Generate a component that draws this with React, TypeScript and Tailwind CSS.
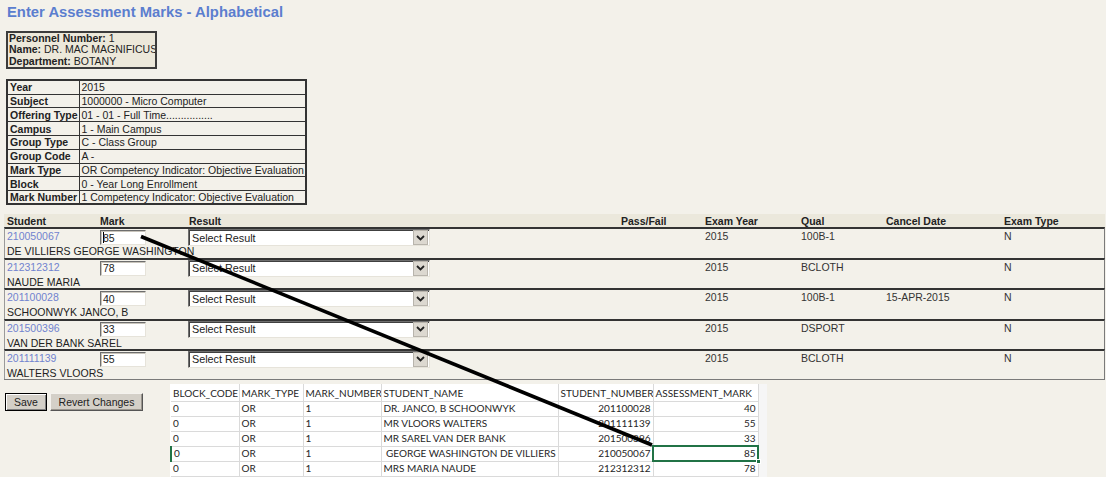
import React from "react";

const info: [string, string][] = [
  ["Year", "2015"],
  ["Subject", "1000000 - Micro Computer"],
  ["Offering Type", "01 - 01 - Full Time................"],
  ["Campus", "1 - Main Campus"],
  ["Group Type", "C - Class Group"],
  ["Group Code", "A -"],
  ["Mark Type", "OR Competency Indicator: Objective Evaluation"],
  ["Block", "0 - Year Long Enrollment"],
  ["Mark Number", "1 Competency Indicator: Objective Evaluation"],
];

const students = [
  { num: "210050067", mark: "85", qual: "100B-1", cancel: "", name: "DE VILLIERS GEORGE WASHINGTON", caret: true },
  { num: "212312312", mark: "78", qual: "BCLOTH", cancel: "", name: "NAUDE MARIA", caret: false },
  { num: "201100028", mark: "40", qual: "100B-1", cancel: "15-APR-2015", name: "SCHOONWYK JANCO, B", caret: false },
  { num: "201500396", mark: "33", qual: "DSPORT", cancel: "", name: "VAN DER BANK SAREL", caret: false },
  { num: "201111139", mark: "55", qual: "BCLOTH", cancel: "", name: "WALTERS VLOORS", caret: false },
];

const excelRows = [
  ["0", "OR", "1", "DR. JANCO, B SCHOONWYK", "201100028", "40"],
  ["0", "OR", "1", "MR VLOORS WALTERS", "201111139", "55"],
  ["0", "OR", "1", "MR SAREL VAN DER BANK", "201500396", "33"],
  ["0", "OR", "1", "\u00a0GEORGE WASHINGTON DE VILLIERS", "210050067", "85"],
  ["0", "OR", "1", "MRS MARIA NAUDE", "212312312", "78"],
];

const excelHeads = ["BLOCK_CODE", "MARK_TYPE", "MARK_NUMBER", "STUDENT_NAME", "STUDENT_NUMBER", "ASSESSMENT_MARK"];

function Chevron() {
  return (
    <svg width="9" height="6" viewBox="0 0 9 6">
      <polyline points="1,1 4.5,4.5 8,1" fill="none" stroke="#222" strokeWidth="1.8" />
    </svg>
  );
}

export default function App() {
  return (
    <div className="relative w-[1106px] h-[477px] overflow-hidden bg-[#f3f1ea] font-['Liberation_Sans',Arial,sans-serif] text-[10.5px] text-[#222]">
      {/* Title */}
      <div className="pt-[3px] pl-[7px] text-[14.8px] leading-[18px] font-bold text-[#5b7ecf]">
        Enter Assessment Marks - Alphabetical
      </div>

      {/* Personnel box */}
      <div className="mt-[10px] ml-[6px] w-[151px] border-2 border-[#3c3c3c] bg-[#ece8da] pl-[1px] leading-[11.4px] whitespace-nowrap overflow-hidden">
        <div>
          <span className="font-bold">Personnel Number:</span> 1
        </div>
        <div>
          <span className="font-bold">Name:</span> DR. MAC MAGNIFICUS
        </div>
        <div>
          <span className="font-bold">Department:</span> BOTANY
        </div>
      </div>

      {/* Info table */}
      <table className="mt-[10px] ml-[6px] w-[300px] border-collapse border-2 border-[#333]">
        <tbody>
          {info.map(([k, v]) => (
            <tr key={k}>
              <td className="w-[72px] border border-[#333] px-[2px] py-0 h-[13.8px] leading-[12px] font-bold whitespace-nowrap">
                {k}
              </td>
              <td className="border border-[#333] px-[1px] py-0 leading-[12px] whitespace-nowrap">{v}</td>
            </tr>
          ))}
        </tbody>
      </table>

      {/* Student table */}
      <div className="mt-[9px] ml-[4px] w-[1101px]">
        <div className="flex h-[13px] items-center bg-[#ebe8dc] pl-[3px] font-bold leading-[12px]">
          <div className="w-[93px]">Student</div>
          <div className="w-[89px]">Mark</div>
          <div className="w-[432px]">Result</div>
          <div className="w-[84px]">Pass/Fail</div>
          <div className="w-[96px]">Exam Year</div>
          <div className="w-[85px]">Qual</div>
          <div className="w-[118px]">Cancel Date</div>
          <div>Exam Type</div>
        </div>
        <div className="border-b border-[#7a7a7a]">
          {students.map((s) => (
            <div
              key={s.num}
              className="border-t-2 border-t-[#333] border-l border-l-[#9a9a9a] border-r border-r-[#7a7a7a] pl-[2px]"
            >
              <div className="flex h-[17px] items-start">
                <div className="w-[93px] text-[#7183cf] leading-[12px] pt-[1px]">{s.num}</div>
                <div className="w-[88px] pt-[1px]">
                  <div className="flex h-[15px] w-[46px] items-center border border-t-[#6e6e6e] border-l-[#6e6e6e] border-b-[#e6e3da] border-r-[#e6e3da] bg-white pl-[2px] leading-[12px] shadow-[inset_1px_1px_0_#c8c4bb]">
                    {s.caret && <span className="mr-[-1px] h-[11px] w-px bg-black" />}
                    {s.mark}
                  </div>
                </div>
                <div className="w-[433px]">
                  <div className="flex h-[17px] w-[242px] items-center border border-t-[#6e6e6e] border-l-[#6e6e6e] border-b-[#e6e3da] border-r-[#e6e3da] bg-white shadow-[inset_1px_1px_0_#404040]">
                    <div className="flex-1 pl-[3px] text-[10.8px] leading-[12px]">Select Result</div>
                    <div className="mr-[1px] flex h-[15px] w-[15px] items-center justify-center border border-[#b8b4ac] bg-[#dcd8d0]">
                      <Chevron />
                    </div>
                  </div>
                </div>
                <div className="w-[84px]" />
                <div className="w-[96px] leading-[12px] pt-[1px] text-[#333]">2015</div>
                <div className="w-[85px] leading-[12px] pt-[1px] text-[#333]">{s.qual}</div>
                <div className="w-[118px] leading-[12px] pt-[1px] text-[#333]">{s.cancel}</div>
                <div className="leading-[12px] pt-[1px] text-[#333]">N</div>
              </div>
              <div className="h-[11.4px] leading-[11px] whitespace-nowrap">{s.name}</div>
            </div>
          ))}
        </div>
      </div>

      {/* Bottom section */}
      <div className="flex">
        <div className="w-[170px] pl-[5px] pt-[13px]">
          <div className="flex gap-[3px]">
            <button className="h-[18px] w-[42px] border border-black bg-[#d4d0c8] shadow-[inset_1px_1px_0_#fff,inset_-1px_-1px_0_#808080] leading-[12px] text-[#222]">
              Save
            </button>
            <button className="h-[18px] w-[93px] border border-t-[#f4f2ee] border-l-[#f4f2ee] border-b-[#555] border-r-[#555] bg-[#d4d0c8] shadow-[inset_-1px_-1px_0_#9a968e] leading-[12px] text-[#222]">
              Revert Changes
            </button>
          </div>
        </div>
        <div className="mt-[4px] flex">
          <table className="w-[587px] table-fixed border-collapse bg-white font-['Lato',sans-serif] text-[10px] text-[#262626]">
            <colgroup>
              <col className="w-[68px]" />
              <col className="w-[64px]" />
              <col className="w-[78px]" />
              <col className="w-[177px]" />
              <col className="w-[95px]" />
              <col className="w-[105px]" />
            </colgroup>
            <thead>
              <tr>
                {excelHeads.map((h) => (
                  <td
                    key={h}
                    className="h-[17px] overflow-hidden border-r border-b border-[#dadada] px-[2px] py-0 pt-[2px] leading-[13px] text-left whitespace-nowrap"
                  >
                    {h}
                  </td>
                ))}
              </tr>
            </thead>
            <tbody>
              {excelRows.map((r, ri) => (
                <tr key={ri}>
                  {r.map((c, ci) => {
                    const sel = ri === 3 && ci === 5;
                    return (
                      <td
                        key={ci}
                        className={
                          "relative h-[15px] border-r border-b border-[#dadada] px-[2px] py-0 leading-[13px] whitespace-pre " +
                          (ci >= 4 ? "text-right " : "text-left ") +
                          (ri === 3 && ci === 0 ? "border-l-2 border-l-[#217346] " : "") +
                          (sel ? "outline-2 outline-[#217346] -outline-offset-1" : "")
                        }
                      >
                        {c}
                        {sel && (
                          <span className="absolute right-[-3px] bottom-[-3px] h-[5px] w-[5px] border border-white bg-[#217346]" />
                        )}
                      </td>
                    );
                  })}
                </tr>
              ))}
            </tbody>
          </table>
          <div className="w-[8px] bg-[#f6f6f6]" />
        </div>
      </div>

      {/* Annotation line */}
      <svg className="pointer-events-none absolute left-0 top-0" width="1106" height="477">
        <line x1="141" y1="236.5" x2="652" y2="445" stroke="#000" strokeWidth="3.6" strokeLinecap="butt" />
      </svg>
    </div>
  );
}
